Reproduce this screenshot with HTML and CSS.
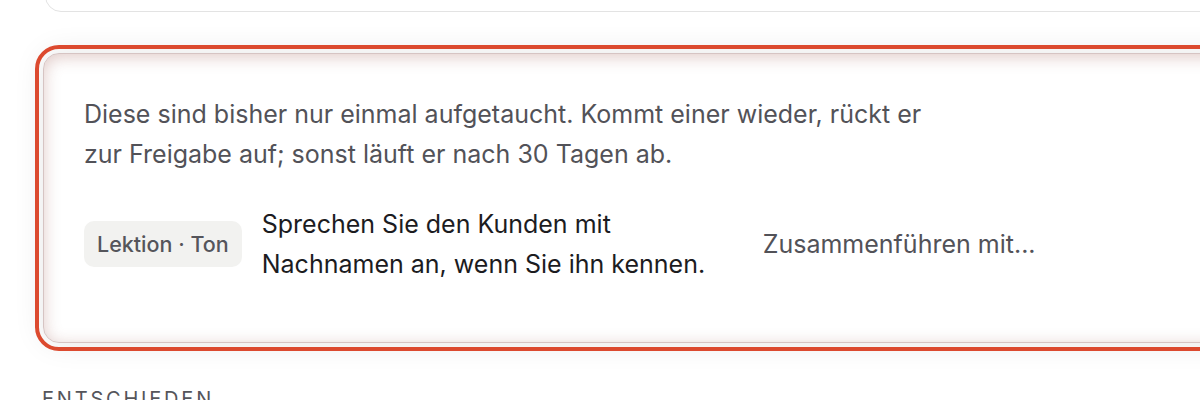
FILE: index.html
```html
<!DOCTYPE html>
<html lang="de">
<head>
<meta charset="utf-8">
<title>Kandidaten</title>
<link rel="stylesheet" href="styles.css">
</head>
<body>
<div class="page">
  <div class="card card-prev"></div>
  <section class="card card-focus">
    <p class="intro">Diese sind bisher nur einmal aufgetaucht. Kommt einer wieder, rückt er zur Freigabe auf; sonst läuft er nach 30 Tagen ab.</p>
    <div class="item">
      <span class="chip">Lektion · Ton</span>
      <span class="sentence">Sprechen Sie den Kunden mit Nachnamen an, wenn Sie ihn kennen.</span>
      <button class="merge" type="button">Zusammenführen mit...</button>
    </div>
  </section>
  <h2 class="section-title">Entschieden</h2>
</div>
</body>
</html>
```
FILE: styles.css
```css
html, body {
  margin: 0;
  padding: 0;
  overflow: hidden;
  background: #ffffff;
}
body {
  font-family: Inter, "Noto Sans", "Liberation Sans", sans-serif;
  color: #4f4f55;
}
.page {
  width: 1260px;
  padding-left: 42px;
  display: flex;
  flex-direction: column;
}
.card {
  background: #ffffff;
  border-radius: 16px;
  box-sizing: border-box;
}
.card-prev {
  height: 72px;
  margin-top: -60px;
  margin-left: 3px;
  border: 1px solid #e3e3e3;
}
.card-focus {
  margin-top: 41px;
  margin-left: 1px;
  border: 1px solid #d6c4c3;
  padding: 40px 40px 58px 40px;
  outline: 4px solid #dc4a2f;
  outline-offset: 4px;
  box-shadow: inset 0 3px 16px rgba(160, 90, 80, 0.32), 0 0 30px rgba(0, 0, 0, 0.10);
}
.intro {
  margin: 0;
  max-width: 860px;
  font-size: 25px;
  line-height: 40px;
  color: #525258;
}
.item {
  margin-top: 30px;
  display: flex;
  align-items: center;
}
.chip {
  background: #f2f2f0;
  border-radius: 10px;
  padding: 0 13px;
  height: 46px;
  display: flex;
  align-items: center;
  font-size: 21.5px;
  font-weight: 500;
  color: #55555b;
  white-space: nowrap;
}
.sentence {
  margin-left: 20px;
  width: 470px;
  font-size: 25px;
  line-height: 40px;
  color: #1c1c1f;
}
.merge {
  margin-left: 31px;
  padding: 0;
  border: none;
  background: none;
  font-family: inherit;
  font-size: 25px;
  color: #525258;
}
.section-title {
  margin: 44px 0 0 0;
  font-size: 20px;
  font-weight: 400;
  letter-spacing: 2.8px;
  text-transform: uppercase;
  line-height: 24px;
  color: #55555b;
}
```
